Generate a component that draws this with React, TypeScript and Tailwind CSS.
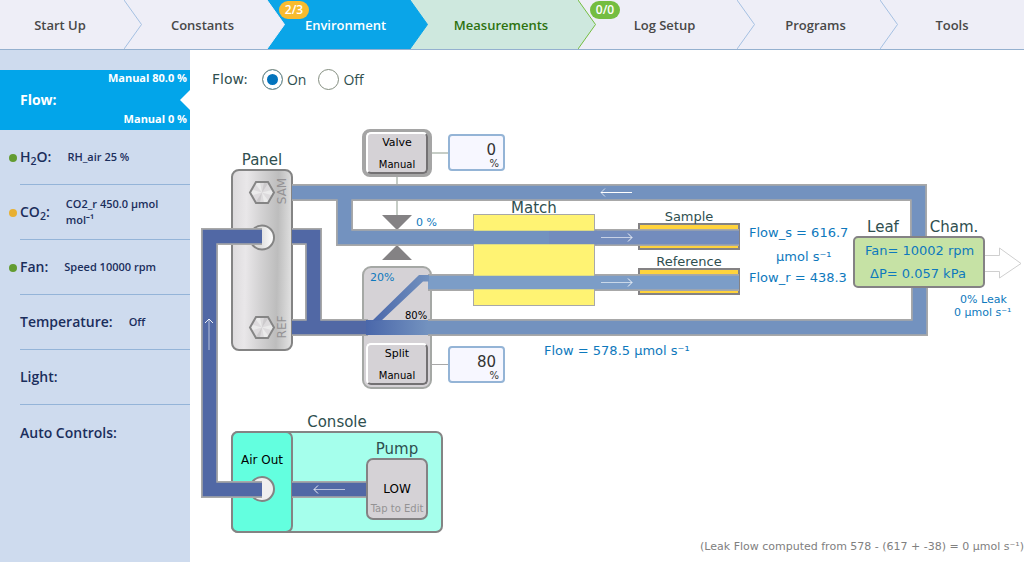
import React, { useState } from "react";
import clsx from "clsx";

// --- Data ---
type Tab = {
  label: string;
  className: string;
  fill: string;
  line: string;
  badge?: string;
  badgeClass?: string;
};

const TABS: Tab[] = [
  { label: "Start Up", className: "flex-124 text-[#484848]", fill: "#eeeef7", line: "#a5c0e2" },
  { label: "Constants", className: "flex-143 text-[#484848]", fill: "#eeeef7", line: "#eeeef7" },
  {
    label: "Environment",
    className: "flex-143 bg-[#0aa5e8] font-bold text-white",
    fill: "#0aa5e8",
    line: "#0aa5e8",
    badge: "2/3",
    badgeClass: "bg-[#f8bb2f]",
  },
  {
    label: "Measurements",
    className: "flex-168 bg-[#cee8de] text-[#2d720f]",
    fill: "#cee8de",
    line: "#74bd40",
  },
  {
    label: "Log Setup",
    className: "flex-159 text-[#484848]",
    fill: "#eeeef7",
    line: "#a5c0e2",
    badge: "0/0",
    badgeClass: "bg-[#74bd40]",
  },
  { label: "Programs", className: "flex-143 text-[#484848]", fill: "#eeeef7", line: "#a5c0e2" },
  { label: "Tools", className: "flex-144 text-[#484848]", fill: "", line: "" },
];

type Item = {
  label: React.ReactNode;
  value?: string;
  dot?: string;
};

const ITEMS: Item[] = [
  {
    label: (
      <>
        H<sub>2</sub>O:
      </>
    ),
    value: "RH_air 25 %",
    dot: "bg-[#639c31]",
  },
  {
    label: (
      <>
        CO<sub>2</sub>:
      </>
    ),
    value: "CO2_r 450.0 μmol mol⁻¹",
    dot: "bg-[#e8b032]",
  },
  { label: "Fan:", value: "Speed 10000 rpm", dot: "bg-[#639c31]" },
  { label: "Temperature:", value: "Off" },
  { label: "Light:" },
  { label: "Auto Controls:" },
];

// --- Header ---
const TabBar = () => (
  <header className="border-b border-[#94b0cf] bg-[#eeeef7]">
    <nav className="flex h-[49px]">
      {TABS.map((tab, i) => {
        const first = i === 0;
        const last = i === TABS.length - 1;

        return (
          <a
            key={tab.label}
            href="#"
            className={clsx(
              "relative flex min-w-0 items-center justify-center text-[13px] font-semibold whitespace-nowrap",
              tab.className
            )}
          >
            {/* The arrow of the tab before covers the left edge */}
            <span className={clsx("pt-0.5", first && "pr-1", !first && !last && "pl-3.5")}>
              {tab.label}
            </span>
            {tab.badge && (
              <span
                className={clsx(
                  "absolute top-px left-3 z-20 h-[18px] w-[30px] rounded-full text-center text-[12px] leading-[18px] font-semibold text-white",
                  tab.badgeClass
                )}
              >
                {tab.badge}
              </span>
            )}
            {!last && (
              <svg className="absolute top-0 left-full z-10 h-full w-[19px]" viewBox="0 0 19 49">
                <path d="M-1 0H0L17.500 24.500L0 49H-1Z" fill={tab.fill} />
                <path d="M0 0L17.500 24.500L0 49" fill="none" stroke={tab.line} />
              </svg>
            )}
          </a>
        );
      })}
    </nav>
  </header>
);

// --- Sidebar ---
const Sidebar = () => (
  <aside className="w-[190px] shrink-0 bg-[#cedbee] pt-5 text-[#1b2e5c]">
    <a
      href="#"
      className="relative flex h-[60px] flex-col justify-between bg-[#02a5ea] pr-[3px] pl-5 font-bold text-white"
    >
      <span className="text-right text-[11px] leading-4">Manual 80.0 %</span>
      <span className="pt-0.5 text-[14px] leading-5">Flow:</span>
      <span className="pb-[3px] text-right text-[11px] leading-4">Manual 0 %</span>
      <svg className="absolute top-5 right-0 h-5 w-[10px]" viewBox="0 0 10 20">
        <path d="M10 0V20L0 10Z" fill="#fff" />
      </svg>
    </a>
    <ul>
      {ITEMS.map((item, i) => (
        <li key={i} className="pl-5">
          <a
            href="#"
            className={clsx(
              "relative flex h-[55px] items-center gap-4",
              i < ITEMS.length - 1 && "border-b border-[#94b4d8]"
            )}
          >
            {item.dot && (
              <span className={clsx("absolute top-6 -left-[11px] size-2 rounded-full", item.dot)} />
            )}
            <span className="text-[14px] leading-5 font-semibold whitespace-nowrap">{item.label}</span>
            {item.value && (
              <span className="pr-6 text-[11px] leading-4 font-semibold">{item.value}</span>
            )}
          </a>
        </li>
      ))}
    </ul>
  </aside>
);

// --- Diagram pieces ---
type PipeProps = { d: string; color: string };

const PipeEdge = ({ d }: { d: string }) => (
  <path d={d} fill="none" stroke="#a8a8a8" strokeWidth={17} />
);

const PipeFill = ({ d, color }: PipeProps) => (
  <path d={d} fill="none" stroke={color} strokeWidth={13.5} />
);

const Pipe = ({ d, color }: PipeProps) => (
  <>
    <PipeEdge d={d} />
    <PipeFill d={d} color={color} />
  </>
);

const Arrow = ({ transform, faded = true }: { transform: string; faded?: boolean }) => (
  <g transform={transform} fill="none" stroke="#fff">
    <path d="M0 0H31" strokeOpacity={faded ? 0.6 : 1} />
    <path d="M27 -4L31 0L27 4" strokeOpacity={faded ? 0.9 : 0.7} />
  </g>
);

const HexPort = ({ y }: { y: number }) => (
  <g transform={`translate(262 ${y})`}>
    <path d="M-12 0L-6 -10.500H6L12 0L6 10.500H-6Z" fill="#dddbdd" />
    <path d="M0 0L-7 -9L-2 -10ZM0 0L7 9L2 10ZM0 0L11 -3V3ZM0 0L-11 -3V3Z" fill="#ebebeb" />
    <path d="M0 0L2 -10L6 -9ZM0 0L-2 10L-6 9Z" fill="#cccacc" />
    <path d="M-12 0L-6 -10.500H6L12 0L6 10.500H-6Z" fill="none" stroke="#858585" strokeWidth={2} />
  </g>
);

const Drawing = () => (
  <svg className="block h-[430px] w-[834px]" viewBox="190 100 834 430" overflow="visible">
    <defs>
      <linearGradient id="metal" x2="1" y2="0.050">
        <stop offset="0" stopColor="#dbd9db" />
        <stop offset="0.25" stopColor="#e9e7e9" />
        <stop offset="0.5" stopColor="#d3d2d3" />
        <stop offset="0.78" stopColor="#bdbdbd" />
        <stop offset="1" stopColor="#dedede" />
      </linearGradient>
      <linearGradient id="split">
        <stop offset="0" stopColor="#4a67aa" />
        <stop offset="1" stopColor="#7392bf" />
      </linearGradient>
      <linearGradient id="port">
        <stop offset="0.4" stopColor="#dcdcdc" />
        <stop offset="1" stopColor="#ffffff" />
      </linearGradient>
    </defs>

    {/* Panel */}
    <rect x="232" y="170" width="60" height="180" rx="7" fill="url(#metal)" stroke="#848484" strokeWidth={2} />
    <HexPort y={192.5} />
    <HexPort y={327.5} />
    <circle cx="262" cy="237.500" r="12" fill="url(#port)" stroke="#848484" strokeWidth={2} />

    {/* Console */}
    <rect x="232" y="432" width="210" height="100" rx="6" fill="#a5ffec" stroke="#848484" strokeWidth={2} />
    <rect x="232" y="432" width="60" height="100" rx="6" fill="#63ffdf" stroke="#848484" strokeWidth={2} />
    <circle cx="262" cy="489" r="12" fill="#efefef" stroke="#848484" strokeWidth={2} />

    {/* Splitter body */}
    <rect x="363" y="267" width="68" height="121" rx="8" fill="#d5d2d6" stroke="#a5a8a5" strokeWidth={2} />

    {/* Valve */}
    <path d="M397 176V216M430 153H448" stroke="#c6cdc6" strokeWidth={2} />
    <path d="M430 364.500H448" stroke="#a8a8a8" />
    <rect x="364" y="131" width="66" height="44" rx="6" fill="#d5d2d6" stroke="#a5a5a5" strokeWidth={4} />
    <path d="M382 215H412L397 230ZM382 260H412L397 245Z" fill="#848284" />

    {/* Sample and reference cells */}
    <rect x="639" y="224" width="100" height="25" fill="#ffd33c" stroke="#848284" strokeWidth={2} />
    <rect x="639" y="269" width="100" height="25" fill="#ffd33c" stroke="#848284" strokeWidth={2} />

    {/* Dark supply pipes */}
    <Pipe d="M262 236.500H209.500V489.500H262" color="#5168a5" />
    <Pipe d="M292 489.500H367" color="#5168a5" />
    <PipeEdge d="M292 236.500H313.500V327.500M292 327.500H368" />
    <PipeFill d="M292 236.500H313.500V327.500M292 327.500H370" color="#5168a5" />

    {/* Light return pipes */}
    <PipeEdge d="M292 192.500H918.500V237M344.500 192.500V237.500H739M428 327.500H919.500V287" />
    <PipeFill d="M292 192.500H918.500V237M344.500 192.500V237.500H739M428 327.500H919.500V287" color="#7392bf" />
    <PipeFill d="M595 237.500H739" color="#738cbd" />
    <Pipe d="M428 282.500H739" color="#7c9dc7" />

    {/* Match valve */}
    <rect x="473.500" y="214.500" width="121" height="91" fill="#fff373" stroke="#a8a8a8" />
    <PipeFill d="M472 237.500H549" color="#7392bf" />
    <PipeFill d="M549 237.500H597" color="#738cbd" />
    <PipeFill d="M472 282.500H597" color="#7c9dc7" />

    {/* Split flow */}
    <path d="M366 320H428V335H366Z" fill="url(#split)" />
    <path d="M372 321L419 275H429V281.500H423L381 321Z" fill="url(#split)" />

    {/* Chamber */}
    <path d="M984 255.500H999.500V248L1021 263.500L999.500 278V271.500H984" fill="#fff" stroke="#cfcfcf" />
    <rect x="854" y="237" width="130" height="50" rx="4" fill="#c6e2a5" stroke="#848284" strokeWidth={2} />

    <Arrow transform="translate(632 192.500) rotate(180)" faded={false} />
    <Arrow transform="translate(601 237.500)" />
    <Arrow transform="translate(601 282.500)" />
    <Arrow transform="translate(209 350) rotate(-90)" />
    <Arrow transform="translate(345 489.500) rotate(180)" />

    {/* Labels */}
    <g fill="#2f4f4f" textAnchor="middle" className="text-[15px]">
      <text x="262" y="165">Panel</text>
      <text x="337" y="427">Console</text>
      <text x="397" y="454">Pump</text>
      <text x="534" y="213">Match</text>
      <text x="883" y="232">Leaf</text>
      <text x="954" y="232">Cham.</text>
    </g>
    <g fill="#2f4f4f" textAnchor="middle" className="text-[13px]">
      <text x="689" y="221">Sample</text>
      <text x="689" y="266">Reference</text>
    </g>
    <g fill="#949294" textAnchor="middle" className="text-[12px]">
      <text transform="translate(286 191) rotate(-90)">SAM</text>
      <text transform="translate(286 327) rotate(-90)">REF</text>
    </g>
    <g fill="#0e79bd" className="text-[13px]">
      <text x="749" y="237">Flow_s = 616.7</text>
      <text x="776" y="261">μmol s⁻¹</text>
      <text x="749" y="282">Flow_r = 438.3</text>
      <text x="544" y="355">Flow = 578.5 μmol s⁻¹</text>
      <text x="865" y="255">Fan= 10002 rpm</text>
      <text x="870" y="278">ΔP= 0.057 kPa</text>
    </g>
    <g fill="#0e79bd" className="text-[11px]">
      <text x="416" y="226">0 %</text>
      <text x="370" y="281">20%</text>
      <text x="960" y="303">0% Leak</text>
      <text x="954" y="316">0 μmol s⁻¹</text>
    </g>
    <text x="405" y="319" className="text-[10px]">80%</text>
    <text x="262" y="464" textAnchor="middle" className="text-[12px]">Air Out</text>
  </svg>
);

const ModeButton = ({ name, className }: { name: string; className: string }) => (
  <button
    className={clsx(
      "absolute flex h-[42px] w-[62px] flex-col items-center justify-between rounded-[5px] border-2 border-t-white border-r-[#737173] border-b-[#737173] border-l-white bg-[#d5d2d6] pb-px text-black",
      className
    )}
  >
    <span className="pt-px text-[11px] leading-4">{name}</span>
    <span className="text-[10px] leading-3">Manual</span>
  </button>
);

const PercentField = ({ label, value, className }: { label: string; value: string; className: string }) => (
  <label
    className={clsx(
      "absolute flex h-[37px] w-[57px] flex-col justify-end rounded-[4px] border-2 border-[#94b4d6] bg-[#f7f7ff] pr-1 pb-px text-right text-[#333]",
      className
    )}
  >
    <input
      aria-label={label}
      defaultValue={value}
      className="h-5 w-full bg-transparent pr-[3px] text-right text-[15px] outline-none"
    />
    <span className="text-[10px] leading-[8px]">%</span>
  </label>
);

const Diagram = () => (
  <section className="relative w-[834px]">
    <Drawing />
    <ModeButton name="Valve" className="top-[32px] left-[176px]" />
    <PercentField label="Valve" value="0" className="top-[34px] left-[258px]" />
    <ModeButton name="Split" className="top-[243px] left-[176px]" />
    <PercentField label="Split" value="80" className="top-[246px] left-[258px]" />
    <button className="absolute top-[358px] left-[176px] flex h-[62px] w-[62px] flex-col items-center justify-end rounded-[7px] border-2 border-[#848284] bg-[#d5d2d6] pb-px">
      <span className="pb-1 text-[12px] leading-4 text-black">LOW</span>
      <span className="text-[10px] leading-4 whitespace-nowrap text-[#949294]">Tap to Edit</span>
    </button>
  </section>
);

// --- Flow switch ---
const RADIO =
  "size-[21px] appearance-none rounded-full border border-[#848e80] bg-white checked:bg-[#0273bd] checked:shadow-[inset_0_0_0_4px_#fff]";

const FlowSwitch = () => {
  const [flow, setFlow] = useState("On");

  return (
    <div role="radiogroup" aria-label="Flow" className="flex h-[50px] items-center pt-[9px] pl-[22px] text-[#2f4f4f]">
      <span className="mr-3.5 font-[DejaVu_Sans] text-[14px]">Flow:</span>
      {["On", "Off"].map((option) => (
        <label key={option} className="mr-3 flex items-center gap-1 text-[14px]">
          <input
            type="radio"
            name="flow"
            className={RADIO}
            checked={flow === option}
            onChange={() => setFlow(option)}
          />
          {option}
        </label>
      ))}
    </div>
  );
};

export default function App() {
  return (
    <div className="flex min-h-screen flex-col bg-white font-['Open_Sans',sans-serif]">
      <TabBar />
      <div className="flex flex-1">
        <Sidebar />
        <main className="flex min-w-0 flex-1 flex-col">
          <FlowSwitch />
          <div className="font-['DejaVu_Sans',sans-serif]">
            <Diagram />
          </div>
          <p className="mt-auto pb-[7px] text-right font-['DejaVu_Sans',sans-serif] text-[11px] leading-4 whitespace-nowrap text-[#808080]">
            (Leak Flow computed from 578 - (617 + -38) = 0 μmol s⁻¹)
          </p>
        </main>
      </div>
    </div>
  );
}
